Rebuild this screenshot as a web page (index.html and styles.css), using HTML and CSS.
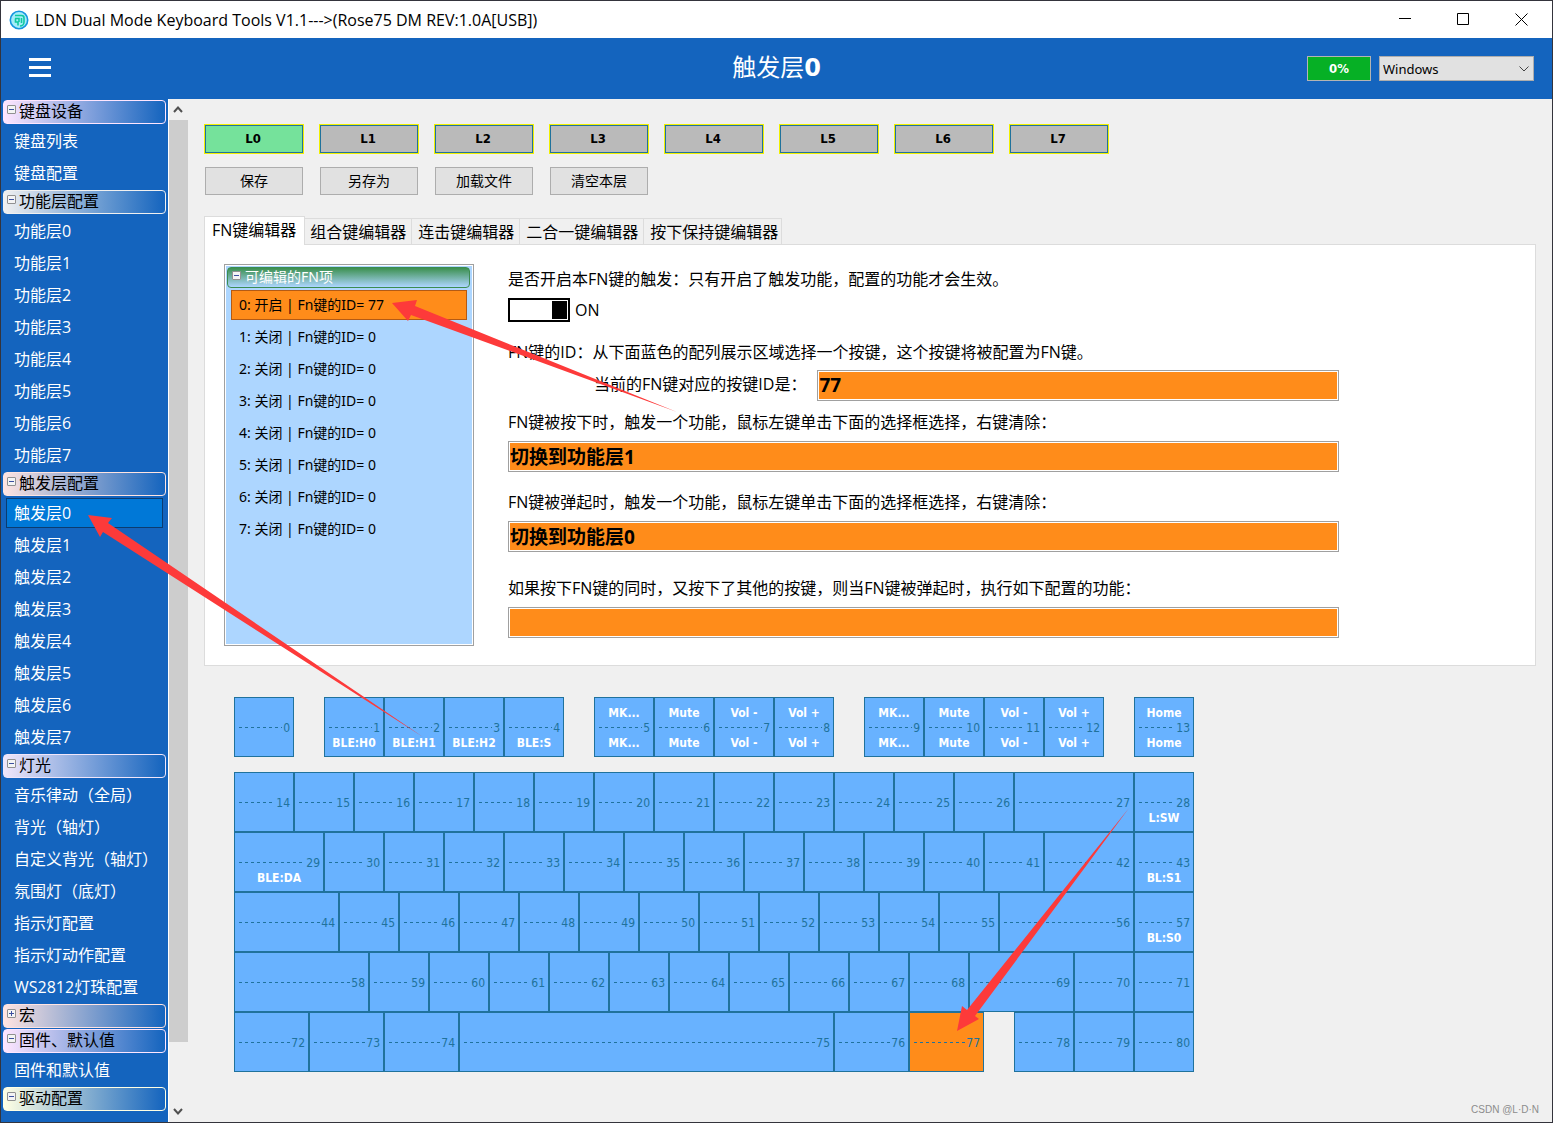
FILE: index.html
```html
<!DOCTYPE html>
<html lang="zh-CN">
<head>
<meta charset="utf-8">
<meta name="viewport" content="width=device-width, initial-scale=1">
<title>LDN Dual Mode Keyboard Tools</title>
<link rel="stylesheet" href="styles.css">
</head>
<body>
<div class="window">
  <div class="titlebar">
    <svg class="logo" width="20" height="20" viewBox="0 0 20 20" aria-hidden="true"><circle cx="10" cy="10" r="8.700" fill="#a4ecf8" stroke="#1496e0" stroke-width="1.600"/><path d="M6 5.500h6.500a2.500 2.500 0 0 1 2.500 2.500v4a4 4 0 0 1-4 4M6 8.500h4v3.500M6.500 8.500v3.500h2.500v3.500M12.500 8v5" fill="none" stroke="#0fc9a0" stroke-width="1.600"/></svg>
    <span class="app-name">LDN Dual Mode Keyboard Tools V1.1---&gt;(Rose75 DM REV:1.0A[USB])</span>
    <div class="caption">
      <button class="cap" aria-label="最小化"><svg width="13" height="13" viewBox="0 0 13 13"><path d="M0 5.500h12" stroke="#000" fill="none"/></svg></button>
      <button class="cap" aria-label="最大化"><svg width="13" height="13" viewBox="0 0 13 13"><path d="M.5.5h11v11h-11z" stroke="#000" fill="none"/></svg></button>
      <button class="cap" aria-label="关闭"><svg width="13" height="13" viewBox="0 0 13 13"><path d="M.5.5l12 12M12.500.5l-12 12" stroke="#000" fill="none"/></svg></button>
    </div>
  </div>

  <header class="topbar">
    <button class="menu" aria-label="菜单"><i></i><i></i><i></i></button>
    <h1 class="page-title">触发层<b>0</b></h1>
    <div class="top-tools">
      <span class="battery">0%</span>
      <span class="os">
        <select class="os-select" aria-label="系统"><option>Windows</option></select>
        <svg class="os-arrow" width="10" height="6" viewBox="0 0 10 6"><path d="M.5.5L5 5 9.500.5" fill="none" stroke="#444"/></svg>
      </span>
    </div>
  </header>

  <div class="body">
    <nav class="sidebar">
      <button class="group pink"><span class="box minus"></span>键盘设备</button>
      <div class="items"><a href="#">键盘列表</a><a href="#">键盘配置</a></div>
      <button class="group gray"><span class="box minus"></span>功能层配置</button>
      <div class="items"><a href="#">功能层0</a><a href="#">功能层1</a><a href="#">功能层2</a><a href="#">功能层3</a><a href="#">功能层4</a><a href="#">功能层5</a><a href="#">功能层6</a><a href="#">功能层7</a></div>
      <button class="group rose"><span class="box minus"></span>触发层配置</button>
      <div class="items"><a href="#" class="current">触发层0</a><a href="#">触发层1</a><a href="#">触发层2</a><a href="#">触发层3</a><a href="#">触发层4</a><a href="#">触发层5</a><a href="#">触发层6</a><a href="#">触发层7</a></div>
      <button class="group lilac"><span class="box minus"></span>灯光</button>
      <div class="items"><a href="#">音乐律动（全局）</a><a href="#">背光（轴灯）</a><a href="#">自定义背光（轴灯）</a><a href="#">氛围灯（底灯）</a><a href="#">指示灯配置</a><a href="#">指示灯动作配置</a><a href="#">WS2812灯珠配置</a></div>
      <button class="group rose"><span class="box plus"></span>宏</button>
      <button class="group pink"><span class="box minus"></span>固件、默认值</button>
      <div class="items"><a href="#">固件和默认值</a></div>
      <button class="group cream"><span class="box minus"></span>驱动配置</button>
    </nav>
    <div class="scrollbar">
      <svg width="19" height="21" viewBox="0 0 19 21"><path d="M5 13l4-4.500 4 4.500" fill="none" stroke="#505050" stroke-width="2"/></svg>
      <div class="track"><div class="thumb"></div></div>
      <svg width="19" height="21" viewBox="0 0 19 21"><path d="M5 8l4 4.500L13 8" fill="none" stroke="#505050" stroke-width="2"/></svg>
    </div>

    <main class="main">
      <div class="layers">
        <button class="layer on">L0</button><button class="layer">L1</button><button class="layer">L2</button><button class="layer">L3</button><button class="layer">L4</button><button class="layer">L5</button><button class="layer">L6</button><button class="layer">L7</button>
      </div>
      <div class="actions">
        <button class="action">保存</button><button class="action">另存为</button><button class="action">加载文件</button><button class="action">清空本层</button>
      </div>

      <div class="tabs" role="tablist">
        <button class="tab active" role="tab">FN键编辑器</button><button class="tab" role="tab">组合键编辑器</button><button class="tab" role="tab">连击键编辑器</button><button class="tab" role="tab">二合一键编辑器</button><button class="tab" role="tab">按下保持键编辑器</button>
      </div>
      <section class="panel">
        <div class="fn-list">
          <button class="fn-head"><span class="box minus"></span>可编辑的FN项</button>
          <button class="fn-item chosen">0: 开启 | Fn键的ID= 77</button>
          <button class="fn-item">1: 关闭 | Fn键的ID= 0</button>
          <button class="fn-item">2: 关闭 | Fn键的ID= 0</button>
          <button class="fn-item">3: 关闭 | Fn键的ID= 0</button>
          <button class="fn-item">4: 关闭 | Fn键的ID= 0</button>
          <button class="fn-item">5: 关闭 | Fn键的ID= 0</button>
          <button class="fn-item">6: 关闭 | Fn键的ID= 0</button>
          <button class="fn-item">7: 关闭 | Fn键的ID= 0</button>
        </div>
        <form class="form">
          <p class="line">是否开启本FN键的触发：只有开启了触发功能，配置的功能才会生效。</p>
          <label class="switch"><input type="checkbox" class="toggle" checked>ON</label>
          <p class="line section">FN键的ID：从下面蓝色的配列展示区域选择一个按键，这个按键将被配置为FN键。</p>
          <div class="id-row"><label for="fn-id">当前的FN键对应的按键ID是：</label><input class="field" id="fn-id" value="77" readonly></div>
          <label class="line after-id" for="fn-down">FN键被按下时，触发一个功能，鼠标左键单击下面的选择框选择，右键清除：</label>
          <input class="field" id="fn-down" value="切换到功能层1" readonly>
          <label class="line section" for="fn-up">FN键被弹起时，触发一个功能，鼠标左键单击下面的选择框选择，右键清除：</label>
          <input class="field" id="fn-up" value="切换到功能层0" readonly>
          <label class="line last" for="fn-combo">如果按下FN键的同时，又按下了其他的按键，则当FN键被弹起时，执行如下配置的功能：</label>
          <input class="field" id="fn-combo" value="" readonly>
        </form>
      </section>

      <div class="keyboard">
        <div class="keys function-row">
          <button class="key"><s>0</s></button>
          <div class="cluster"><button class="key"><s>1</s><b>BLE:H0</b></button><button class="key"><s>2</s><b>BLE:H1</b></button><button class="key"><s>3</s><b>BLE:H2</b></button><button class="key"><s>4</s><b>BLE:S</b></button></div>
          <div class="cluster"><button class="key"><em>MK...</em><s>5</s><b>MK...</b></button><button class="key"><em>Mute</em><s>6</s><b>Mute</b></button><button class="key"><em>Vol -</em><s>7</s><b>Vol -</b></button><button class="key"><em>Vol +</em><s>8</s><b>Vol +</b></button></div>
          <div class="cluster"><button class="key"><em>MK...</em><s>9</s><b>MK...</b></button><button class="key"><em>Mute</em><s>10</s><b>Mute</b></button><button class="key"><em>Vol -</em><s>11</s><b>Vol -</b></button><button class="key"><em>Vol +</em><s>12</s><b>Vol +</b></button></div>
          <button class="key"><em>Home</em><s>13</s><b>Home</b></button>
        </div>
        <div class="keys"><button class="key"><s>14</s></button><button class="key"><s>15</s></button><button class="key"><s>16</s></button><button class="key"><s>17</s></button><button class="key"><s>18</s></button><button class="key"><s>19</s></button><button class="key"><s>20</s></button><button class="key"><s>21</s></button><button class="key"><s>22</s></button><button class="key"><s>23</s></button><button class="key"><s>24</s></button><button class="key"><s>25</s></button><button class="key"><s>26</s></button><button class="key u200"><s>27</s></button><button class="key"><s>28</s><b>L:SW</b></button></div>
        <div class="keys"><button class="key u150"><s>29</s><b>BLE:DA</b></button><button class="key"><s>30</s></button><button class="key"><s>31</s></button><button class="key"><s>32</s></button><button class="key"><s>33</s></button><button class="key"><s>34</s></button><button class="key"><s>35</s></button><button class="key"><s>36</s></button><button class="key"><s>37</s></button><button class="key"><s>38</s></button><button class="key"><s>39</s></button><button class="key"><s>40</s></button><button class="key"><s>41</s></button><button class="key u150"><s>42</s></button><button class="key"><s>43</s><b>BL:S1</b></button></div>
        <div class="keys"><button class="key u175"><s>44</s></button><button class="key"><s>45</s></button><button class="key"><s>46</s></button><button class="key"><s>47</s></button><button class="key"><s>48</s></button><button class="key"><s>49</s></button><button class="key"><s>50</s></button><button class="key"><s>51</s></button><button class="key"><s>52</s></button><button class="key"><s>53</s></button><button class="key"><s>54</s></button><button class="key"><s>55</s></button><button class="key u225"><s>56</s></button><button class="key"><s>57</s><b>BL:S0</b></button></div>
        <div class="keys"><button class="key u225"><s>58</s></button><button class="key"><s>59</s></button><button class="key"><s>60</s></button><button class="key"><s>61</s></button><button class="key"><s>62</s></button><button class="key"><s>63</s></button><button class="key"><s>64</s></button><button class="key"><s>65</s></button><button class="key"><s>66</s></button><button class="key"><s>67</s></button><button class="key"><s>68</s></button><button class="key u175"><s>69</s></button><button class="key"><s>70</s></button><button class="key"><s>71</s></button></div>
        <div class="keys split"><div class="cluster"><button class="key u125"><s>72</s></button><button class="key u125"><s>73</s></button><button class="key u125"><s>74</s></button><button class="key u625"><s>75</s></button><button class="key u125"><s>76</s></button><button class="key u125 picked"><s>77</s></button></div><div class="cluster"><button class="key"><s>78</s></button><button class="key"><s>79</s></button><button class="key"><s>80</s></button></div></div>
      </div>
    </main>
  </div>
  <span class="watermark">CSDN @L·D·N</span>
  <svg class="arrows" width="1200" height="1060" viewBox="0 0 1200 1060" fill="#fd3a3a" aria-hidden="true">
    <path d="M392 303L417 300 415 306 677 412 411 315 408 321z"/>
    <path d="M88 515L112 518 108 523 423 737 103 532 100 537z"/>
    <path d="M957 1031L962 1006 967 1010 1129 808 975 1016 979 1019z"/>
  </svg>
</div>
</body>
</html>
```
FILE: styles.css
```css
:root {
  --blue: #1464be;
  --orange: #ff8c1a;
  --key: #68b2ff;
  --key-line: #20729c;
  --ui: "Open Sans", "Noto Sans CJK SC", sans-serif;
  --list: "Noto Sans", "Noto Sans CJK SC", sans-serif;
  --tahoma: "DejaVu Sans Condensed", "Noto Sans CJK SC", sans-serif;
}
* { box-sizing: border-box; }
body { margin: 0; font: 16px/20px var(--ui); color: #000; }
button, input, select { font: inherit; color: inherit; margin: 0; padding: 0; border: 0; border-radius: 0; background: none; }
p { margin: 0; }
a { color: inherit; text-decoration: none; }

.window {
  position: relative;
  display: flex;
  flex-direction: column;
  height: 100vh;
  overflow: hidden;
  border: 1px solid #34343c;
  background: #f0f0f0;
}

.titlebar { display: flex; align-items: center; flex: none; height: 37px; padding: 0 2px 0 8px; background: #fff; }
.logo { margin-right: 6px; }
.app-name { font-size: 16px; white-space: nowrap; }
.caption { display: flex; margin-left: auto; }
.cap { display: flex; align-items: center; justify-content: center; width: 58px; height: 36px; }

.topbar { display: grid; grid-template-columns: 1fr auto 1fr; align-items: center; flex: none; height: 61px; padding: 0 18px; background: var(--blue); color: #fff; }
.menu { display: flex; flex-direction: column; gap: 5px; width: 22px; margin: 0 0 2px 10px; }
.menu i { height: 3px; background: #fff; }
.page-title { margin: 0; padding-bottom: 2px; font-size: 24px; line-height: 32px; font-weight: 400; }
.page-title b { font-family: "DejaVu Sans", sans-serif; }
.top-tools { display: flex; justify-content: flex-end; gap: 8px; }
.battery { width: 64px; height: 25px; border: 1px solid #b4b4b4; background: #06b025; font: bold 13px/24px var(--tahoma); text-align: center; }
.os { position: relative; }
.os-select { appearance: none; display: block; width: 155px; height: 25px; padding-left: 3px; border: 1px solid #adadad; background: #e1e1e1; color: #000; font: 13px/22px var(--list); }
.os-arrow { position: absolute; right: 5px; top: 10px; pointer-events: none; }

.body { display: flex; flex: 1; min-height: 0; }
.sidebar { flex: none; width: 167px; padding: 1px 2px 0; overflow: hidden; background: var(--blue); color: #fff; }
.group { display: flex; align-items: center; gap: 3px; width: 100%; height: 24px; margin-bottom: 1px; padding: 0 0 2px 3px; border: 1px solid var(--tint); border-radius: 4px; background: linear-gradient(90deg, var(--tint), var(--blue)); color: #000; }
.pink { --tint: #ffe6ff; }
.gray { --tint: #f0f0f0; }
.rose { --tint: #ffe4e1; }
.lilac { --tint: #f0e6fa; }
.cream { --tint: #ffffe4; }
.box { position: relative; flex: none; width: 9px; height: 9px; margin-bottom: 4px; border: 1px solid #919191; border-radius: 1px; background: #f4f4f4; }
.box::before { content: ""; position: absolute; left: 1px; top: 3px; width: 5px; height: 1px; background: #3c50a0; }
.plus::after { content: ""; position: absolute; left: 3px; top: 1px; width: 1px; height: 5px; background: #3c50a0; }
.items { padding-bottom: 1px; overflow: hidden; }
.items a { display: block; height: 30px; margin: 1px 3px; padding-left: 7px; border: 1px solid transparent; line-height: 28px; white-space: nowrap; }
.items a + a { margin-top: 2px; }
.items a:not(:last-child) { margin-bottom: 0; }
.items a + a { margin-top: 2px; }
.items .current { border-color: #0b3c70; background: #0078d7; }

.scrollbar { display: flex; flex-direction: column; flex: none; width: 20px; border-left: 1px solid #fff; }
.track { flex: 1; }
.thumb { height: 94%; background: #cdcdcd; }
.scrollbar svg { display: block; flex: none; }

.main { flex: 1; min-width: 0; padding: 25px 16px 0; }
.layers { display: flex; gap: 15px; }
.layer { width: 100px; height: 30px; padding-right: 2px; border: 1px solid #f0f000; outline: 1px solid var(--key-line); outline-offset: -2px; background: #bababa; font: bold 13px/20px var(--tahoma); }
.layer.on { background: #75e29b; }
.actions { display: flex; gap: 17px; margin: 13px 0 0 1px; }
.action { width: 98px; height: 28px; border: 1px solid #adadad; background: #e1e1e1; font-size: 14px; }

.tabs { display: flex; align-items: flex-end; margin-top: 21px; }
.tab { height: 26px; padding: 1px 5px 0 6px; border: 1px solid #dcdcdc; border-left: 0; border-bottom: 0; white-space: nowrap; }
.tab.active { height: 29px; margin-bottom: -1px; padding: 0 8px 2px 7px; border-left: 1px solid #dcdcdc; background: #fff; z-index: 1; }
.tab:nth-child(2) { padding-left: 5px; }
.tab:last-child { padding-right: 3px; }
.panel { display: flex; gap: 34px; padding: 19px 196px 19px 19px; border: 1px solid #dcdcdc; background: #fff; }

.fn-list { display: flex; flex-direction: column; flex: none; width: 250px; height: 382px; padding: 1px 2px; border: 1px solid #a0a0a0; outline: 1px solid #fff; outline-offset: -2px; background: #add6ff; font: 14px/20px var(--list); }
.fn-head { display: flex; align-items: center; gap: 4px; height: 21px; margin: 1px 1px 0 0; padding: 0 0 1px 4px; border: 1px solid #3c8c50; border-radius: 4px; background: linear-gradient(#3c9050, #add6ff); color: #fff; }
.fn-item { height: 30px; margin: 2px 4px 0; padding-left: 7px; border: 1px solid transparent; text-align: left; }
.fn-item.chosen { border-color: #b45a14; background: var(--orange); }

.form { display: flex; flex-direction: column; flex: 1; min-width: 0; padding-top: 5px; }
.line { height: 20px; white-space: nowrap; }
.switch { display: flex; align-items: center; gap: 5px; height: 24px; margin-top: 9px; }
.toggle { appearance: none; width: 62px; height: 24px; border: 2px solid #000; background: linear-gradient(#000, #000) right 1px center / 15px 18px no-repeat #fff; }
.section { margin-top: 20px; }
.id-row { display: flex; align-items: flex-start; gap: 11px; margin: 8px 0 0 86px; line-height: 28px; white-space: nowrap; }
.id-row .field { flex: 1; margin: 0; }
.after-id { margin-top: 11px; }
.last { margin-top: 26px; }
.field { width: 100%; min-width: 0; height: 31px; margin-top: 9px; padding: 0 1px 2px; border: 1px solid #a0a0a0; outline: 1px solid #fff; outline-offset: -2px; background: var(--orange); font-size: 19px; font-weight: 700; }

.keyboard { margin: 31px 0 0 30px; }
.keys, .cluster { display: flex; }
.function-row { gap: 30px; margin-bottom: 15px; }
.split { gap: 30px; }
.key { display: grid; grid-template-rows: 20px 10px 20px; align-content: center; flex: none; width: 60px; height: 60px; padding-top: 2px; border: 1px solid var(--key-line); background: var(--key); color: #fff; font: bold 12px/20px var(--tahoma); }
.key s { grid-row: 2; display: flex; align-items: center; height: 10px; padding: 0 3px 0 4px; color: var(--key-line); font-weight: 400; text-decoration: none; }
.key s::before { content: ""; flex: 1; height: 1px; margin: 0 1px 1px 0; background: repeating-linear-gradient(90deg, var(--key-line) 0 3px, transparent 3px 6px); }
.key em { grid-row: 1; font-style: normal; }
.key b { grid-row: 3; }
.u125 { width: 75px; }
.u150 { width: 90px; }
.u175 { width: 105px; }
.u200 { width: 120px; }
.u225 { width: 135px; }
.u625 { width: 375px; }
.picked { background: var(--orange); }

.watermark { position: absolute; right: 13px; bottom: 4px; color: #8c8c8c; font: 10px/16px "Liberation Sans", sans-serif; }
.arrows { position: absolute; left: -1px; top: -1px; pointer-events: none; }
```
